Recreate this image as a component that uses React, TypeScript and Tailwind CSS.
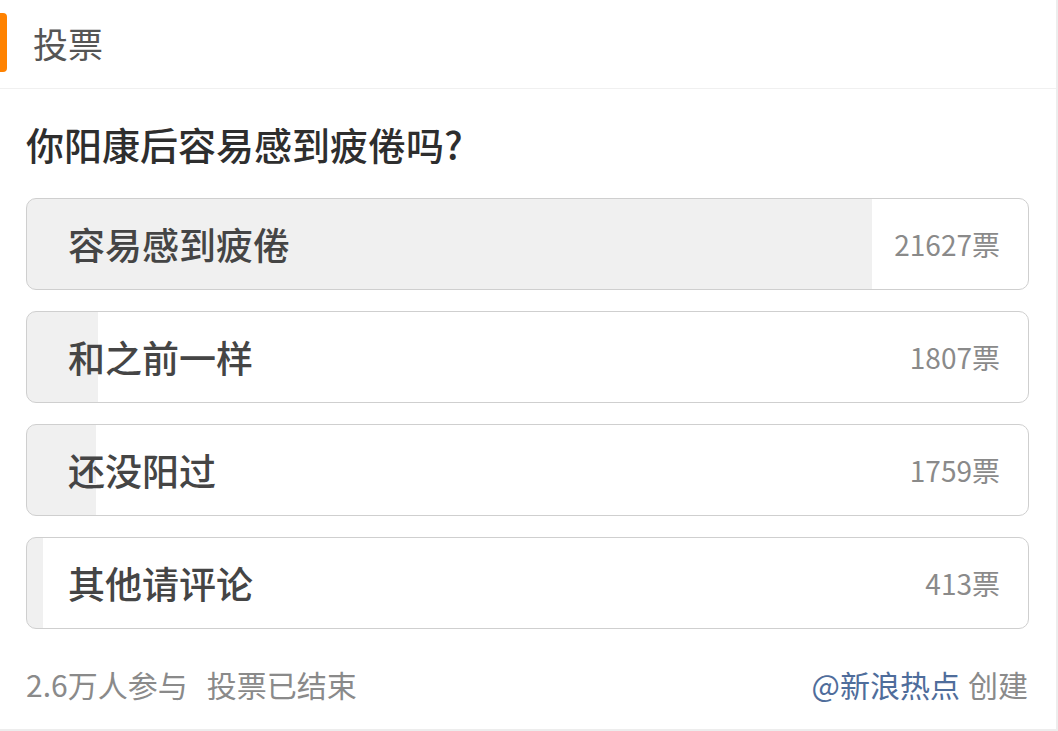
import React from "react";

interface PollOption {
  label: string;
  votes: number;
}

const options: PollOption[] = [
  { label: "容易感到疲倦", votes: 21627 },
  { label: "和之前一样", votes: 1807 },
  { label: "还没阳过", votes: 1759 },
  { label: "其他请评论", votes: 413 },
];

const total = options.reduce((s, o) => s + o.votes, 0);

function OptionRow({ option }: { option: PollOption }) {
  const pct = (option.votes / total) * 100;
  return (
    <div
      className="flex h-[92px] items-center justify-between rounded-[10px] border border-[#cfcfcf] pl-[41px] pr-[28px]"
      style={{ background: `linear-gradient(to right, #f0f0f0 ${pct}%, #ffffff ${pct}%)` }}
    >
      <span className="text-[37px] font-medium leading-none text-[#454545]">{option.label}</span>
      <span className="text-[28px] leading-none text-[#8a8a8a]">{option.votes}票</span>
    </div>
  );
}

export default function App() {
  return (
    <div
      className="h-[731px] w-[1058px] bg-white"
      style={{ fontFamily: '"Noto Sans CJK SC", "Noto Sans", sans-serif' }}
    >
      <div className="flex h-full w-[1058px] flex-col border-r-2 border-b-2 border-[#ededed]">
        <div className="flex h-[89px] shrink-0 items-start border-b border-[#f0f0f0]">
          <div className="mt-[13px] h-[59px] w-[7px] rounded-r-[4px] bg-[#ff8200]" />
          <span className="ml-[26px] mt-[23px] text-[35px] leading-[40px] text-[#555555]">投票</span>
        </div>

        <div className="px-[26px]">
          <h1 className="mt-[33px] text-[38px] font-medium leading-[44px] text-[#2e2e2e]">
            你阳康后容易感到疲倦吗?
          </h1>

          <div className="mt-[32px] flex flex-col gap-[21px] pr-[1px]">
            {options.map((o) => (
              <OptionRow key={o.label} option={o} />
            ))}
          </div>

          <div className="mt-[38px] flex items-center justify-between pr-[2px] text-[30px] leading-[34px] text-[#8a8a8a]">
            <div className="flex gap-[19px]">
              <span>2.6万人参与</span>
              <span>投票已结束</span>
            </div>
            <div>
              <span className="text-[#4f6d9b]">@新浪热点</span>
              <span className="ml-[8px]">创建</span>
            </div>
          </div>
        </div>
      </div>
    </div>
  );
}
